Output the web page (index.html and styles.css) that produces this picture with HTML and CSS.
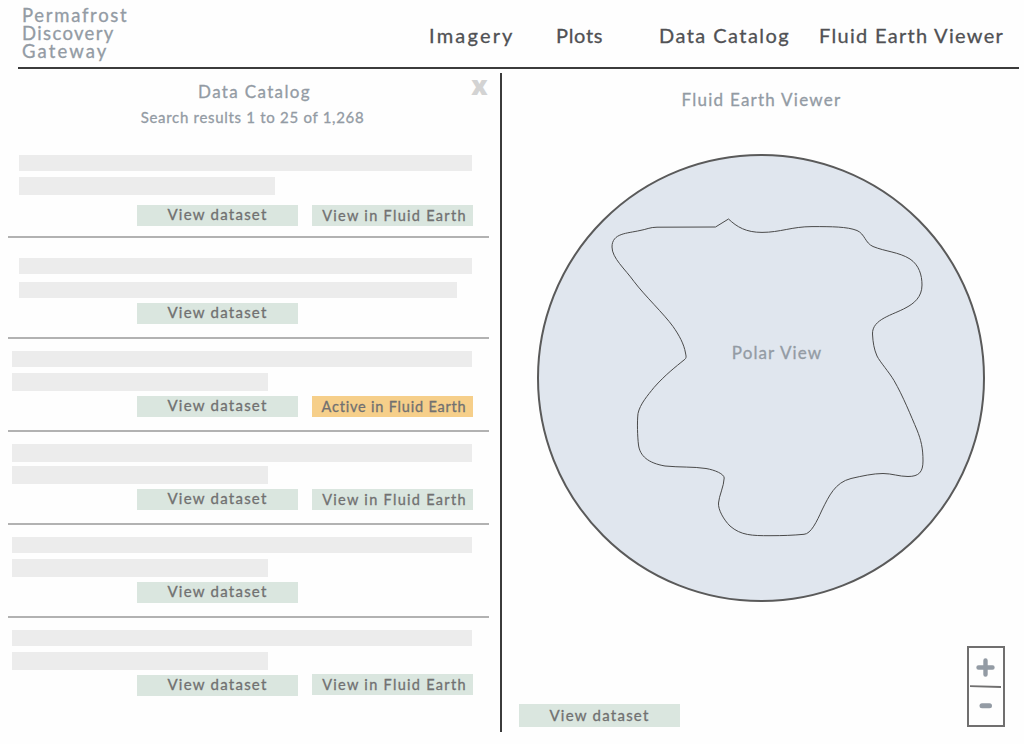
FILE: index.html
```html
<!DOCTYPE html>
<html lang="en">
<head>
<meta charset="utf-8">
<title>Permafrost Discovery Gateway</title>
<link rel="stylesheet" href="styles.css">
</head>
<body>
<header class="header">
  <div class="logo"><span class="logo-a">Permafrost</span><span class="logo-b">Discovery</span><span class="logo-c">Gateway</span></div>
  <nav class="nav">
    <a class="nav-imagery">Imagery</a>
    <a class="nav-plots">Plots</a>
    <a class="nav-catalog">Data Catalog</a>
    <a class="nav-viewer">Fluid Earth Viewer</a>
  </nav>
</header>
<main class="main">
  <section class="catalog">
    <div class="catalog-head">
      <h1 class="title title-catalog">Data Catalog</h1>
      <p class="summary">Search results 1 to 25 of 1,268</p>
      <button class="close" aria-label="Close">x</button>
    </div>
    <ul class="results">
      <li class="result first">
        <div class="bar"></div><div class="bar short"></div>
        <div class="actions"><button class="btn">View dataset</button><button class="btn fluid">View in Fluid Earth</button></div>
      </li>
      <li class="result second">
        <div class="bar"></div><div class="bar long"></div>
        <div class="actions"><button class="btn">View dataset</button></div>
      </li>
      <li class="result">
        <div class="bar"></div><div class="bar short"></div>
        <div class="actions"><button class="btn">View dataset</button><button class="btn fluid active">Active in Fluid Earth</button></div>
      </li>
      <li class="result tall">
        <div class="bar"></div><div class="bar short"></div>
        <div class="actions"><button class="btn">View dataset</button><button class="btn fluid">View in Fluid Earth</button></div>
      </li>
      <li class="result">
        <div class="bar"></div><div class="bar short"></div>
        <div class="actions"><button class="btn">View dataset</button></div>
      </li>
      <li class="result last">
        <div class="bar"></div><div class="bar short"></div>
        <div class="actions"><button class="btn">View dataset</button><button class="btn fluid">View in Fluid Earth</button></div>
      </li>
    </ul>
  </section>
  <section class="viewer">
    <h2 class="title title-viewer">Fluid Earth Viewer</h2>
    <div class="globe">
      <svg class="globe-map" viewBox="537 154 448 448" width="448" height="448">
        <circle cx="761" cy="378" r="223" fill="#e0e6ee" stroke="#5a5a5a" stroke-width="2"/>
        <path fill="none" stroke="#4a4a4a" stroke-width="1" d="M715.5 227L728.5 219C737 227 746 232.4 762 232.4C780 232.4 792 226.600 812 226.600C832 226.600 847 226.600 857 230.500C865 234 865 243 873 246.500C885 251.500 899 252 910 259C919 265 922 275 922 285C922 297 914 303.500 906 307.700C893 315 872 319 872.500 334C873 343 874 349 877 356C880 362 889 372 894 380.500C903 396 911 416 917 430C921 440 923 448 923 461C923 472 919 476.500 908 476.500C899 476.500 892 473.500 883 473.500C873 473.500 862 476 851 478.500C835 482.500 829 496 822 510C817 521 811 534 804 534.300C793 535.300 783 535.700 770 535.700C752 535.700 741 535.500 730 526C724 520 718 510 718.500 503C719 496 724 486 724.200 478C724.200 474 715 470 706 468.500C693 466.500 680 467.500 665 466C648 463 640 456 638.500 445C637.500 437 637 422 638 413.500C640 404 648 395 654 387.500C665 375 676 366.500 684 360C687 358 686 356 685.500 353C684 344 679 335 673 326.500C664 314 645 296 634 281.500C625 269 612 258 612 247C612 233 627 233.500 640 230.500C646 229.500 650 227.200 657 227.200Z"/>
      </svg>
      <span class="globe-label">Polar View</span>
    </div>
    <div class="viewer-foot">
      <button class="btn">View dataset</button>
      <div class="zoom">
        <svg width="34" height="77" viewBox="969 648 34 77">
          <path d="M978.500 667.500H992.500M985.500 660.500V674.500" stroke="#939ba4" stroke-width="4.400" stroke-linecap="round"/>
          <path d="M970 686.200L1001 687" stroke="#706f6f" stroke-width="1.800"/>
          <path d="M982 705.700H989.500" stroke="#939ba4" stroke-width="5" stroke-linecap="round"/>
        </svg>
      </div>
    </div>
  </section>
</main>
</body>
</html>
```
FILE: styles.css
```css
* { box-sizing: border-box; }
body {
  margin: 0;
  width: 1024px;
  height: 744px;
  overflow: hidden;
  background: #fefefe;
  font-family: Lato, "Open Sans", sans-serif;
  font-weight: 400;
  -webkit-text-stroke: 0.3px currentColor;
}
h1, h2, p, ul { margin: 0; padding: 0; font-weight: inherit; list-style: none; }
button { border: 0; padding: 0; font: inherit; color: inherit; -webkit-text-stroke: inherit; }

.header {
  display: flex;
  justify-content: space-between;
  height: 69px;
  margin: 0 5px 0 18px;
  border-bottom: 2px solid #3b3b3b;
}
.logo {
  display: flex;
  flex-direction: column;
  padding: 6px 0 0 4px;
  color: #939ba4;
  font-size: 18.500px;
  line-height: 18px;
}
.logo-a { letter-spacing: 1.700px; }
.logo-b { letter-spacing: 1.350px; }
.logo-c { letter-spacing: 2.100px; }
.nav {
  display: grid;
  grid-template-columns: 127px 103px 160px 200px;
  width: 590px;
  padding-top: 23px;
  color: #505154;
  font-size: 20px;
  line-height: 24px;
  letter-spacing: 1.300px;
  white-space: nowrap;
}
.nav-imagery { letter-spacing: 2.200px; }
.nav-plots { letter-spacing: 0.700px; }
.nav-catalog { letter-spacing: 1.450px; }

.main { display: grid; grid-template-columns: 500px 524px; height: 675px; }
.catalog-head { position: relative; height: 86px; color: #939ba4; text-align: center; }
.title { color: #939ba4; font-size: 17px; line-height: 22px; letter-spacing: 1.250px; text-align: center; }
.title-catalog { padding: 12px 0 0 9px; letter-spacing: 1.350px; }
.summary { padding: 4px 0 0 5px; font-size: 15px; line-height: 20px; letter-spacing: 0.700px; }
.close {
  position: absolute;
  top: 0;
  right: 12px;
  width: 17px;
  background: none;
  color: #d3d3d3;
  font: 800 26px/32px "Open Sans", sans-serif;
  -webkit-text-stroke: 0;
}

.results { width: 481px; margin-left: 8px; }
.result { padding: 12px 0 13px 4px; border-bottom: 2px solid #b2b2b2; }
.bar { width: 460px; height: 16px; background: #ececec; }
.bar + .bar { height: 18px; margin-top: 6px; }
.bar.short { width: 256px; }
.bar.long { width: 438px; }
.first { padding: 0 0 10px 11px; }
.first .bar:first-child, .second .bar:first-child { width: 453px; }
.first .actions { margin: 10px 0 0 118px; }
.second { padding: 20px 0 13px 11px; }
.second .bar + .bar { height: 16px; margin-top: 8px; }
.second .actions { margin-left: 118px; }
.tall .bar:first-child { height: 18px; }
.tall .bar + .bar { margin-top: 4px; }
.last { border-bottom: 0; }
.actions { display: flex; gap: 14px; margin: 5px 0 0 125px; }
.btn {
  width: 161px;
  height: 21px;
  padding-bottom: 2px;
  background: #dae6df;
  color: #717171;
  font-size: 15px;
  line-height: 19px;
  letter-spacing: 1.250px;
  white-space: nowrap;
}
.btn.fluid { padding: 0 0 0 4px; font-size: 14.500px; letter-spacing: 1.300px; }
.btn.active { padding-left: 3px; background: #f6cf8a; letter-spacing: 0.800px; }
.last .fluid { margin-top: -1px; }

.viewer {
  display: flex;
  flex-direction: column;
  height: 659px;
  margin-top: 4px;
  border-left: 2px solid #3b3b3b;
}
.title-viewer { padding: 16px 3px 0 0; }
.globe { display: grid; width: 448px; height: 448px; margin: 43px 0 0 35px; place-items: center; }
.globe-map, .globe-label { grid-area: 1 / 1; }
.globe-map { display: block; }
.globe-label { margin: -52px 0 0 32px; color: #939ba4; font-size: 17px; letter-spacing: 1.100px; }
.viewer-foot { display: flex; justify-content: space-between; align-items: flex-end; margin: 44px 19px 0 17px; }
.viewer-foot .btn { height: 23px; padding: 0; }
.last .fluid { height: 21px; }
.zoom { width: 38px; height: 81px; border: 2px solid #706f6f; }
.zoom svg { display: block; }
```
